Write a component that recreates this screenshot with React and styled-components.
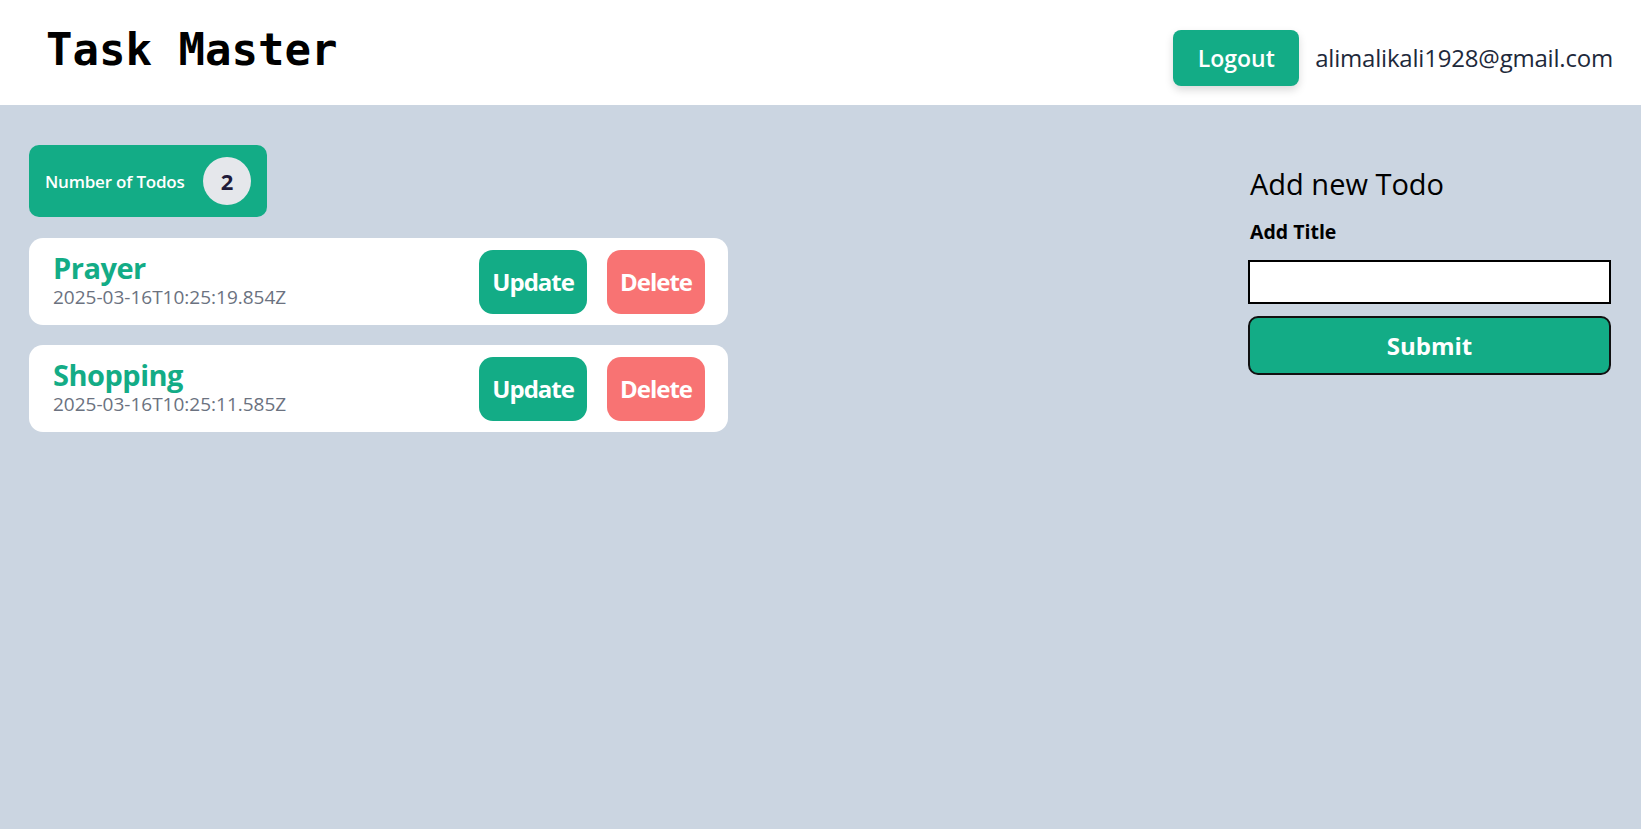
import React, { useState } from 'react';
import styled, { createGlobalStyle } from 'styled-components';

const GlobalStyle = createGlobalStyle`
  html, body {
    margin: 0;
    padding: 0;
    background: #cbd5e1;
    font-family: "Open Sans", "Noto Sans", Arial, sans-serif;
  }
  * {
    box-sizing: border-box;
  }
`;

const todos = [
  { id: 1, title: 'Prayer', createdAt: '2025-03-16T10:25:19.854Z' },
  { id: 2, title: 'Shopping', createdAt: '2025-03-16T10:25:11.585Z' },
];

const App = () => {
  const [title, setTitle] = useState('');

  return (
    <Page>
      <GlobalStyle />
      <Header>
        <Logo>Task Master</Logo>
        <UserBox>
          <LogoutButton>Logout</LogoutButton>
          <Email>alimalikali1928@gmail.com</Email>
        </UserBox>
      </Header>
      <Main>
        <TodoColumn>
          <CountBadge>
            <CountLabel>Number of Todos</CountLabel>
            <CountCircle>{todos.length}</CountCircle>
          </CountBadge>
          {todos.map(todo => (
            <TodoCard key={todo.id}>
              <TodoText>
                <TodoTitle>{todo.title}</TodoTitle>
                <TodoDate>{todo.createdAt}</TodoDate>
              </TodoText>
              <Actions>
                <ActionButton>Update</ActionButton>
                <ActionButton danger>Delete</ActionButton>
              </Actions>
            </TodoCard>
          ))}
        </TodoColumn>
        <FormPanel>
          <FormHeading>Add new Todo</FormHeading>
          <FieldLabel htmlFor="title">Add Title</FieldLabel>
          <TextInput
            id="title"
            value={title}
            onChange={e => setTitle(e.target.value)}
          />
          <SubmitButton>Submit</SubmitButton>
        </FormPanel>
      </Main>
    </Page>
  );
};

const Page = styled.div`
  min-height: 100vh;
  background: #cbd5e1;
`;

const Header = styled.header`
  height: 105px;
  background: #ffffff;
  display: flex;
  align-items: center;
  justify-content: space-between;
  padding: 0 28px 0 46px;
`;

const Logo = styled.h1`
  margin: 0 0 6px;
  font-family: "DejaVu Sans Mono", "Liberation Mono", monospace;
  font-size: 44px;
  font-weight: 700;
  color: #000;
`;

const UserBox = styled.div`
  display: flex;
  align-items: center;
  gap: 16px;
  margin-top: 10px;
`;

const LogoutButton = styled.button`
  width: 126px;
  height: 56px;
  border: none;
  border-radius: 8px;
  background: #13ac86;
  color: #fff;
  font-family: inherit;
  font-size: 23px;
  font-weight: 600;
  box-shadow: 0 4px 8px rgba(0, 0, 0, 0.15);
  cursor: pointer;
`;

const Email = styled.span`
  font-size: 24px;
  font-weight: 500;
  letter-spacing: -0.2px;
  color: #1e293b;
`;

const Main = styled.main`
  display: flex;
  justify-content: space-between;
  align-items: flex-start;
  padding: 40px 30px 0 29px;
`;

const TodoColumn = styled.section`
  width: 699px;
  display: flex;
  flex-direction: column;
  align-items: flex-start;
  gap: 20px;
`;

const CountBadge = styled.div`
  width: 238px;
  height: 72px;
  border-radius: 10px;
  background: #13ac86;
  display: flex;
  align-items: center;
  justify-content: space-between;
  padding: 0 16px 0 16px;
  margin-bottom: 1px;
`;

const CountLabel = styled.span`
  color: #fff;
  font-size: 17px;
  font-weight: 600;
  letter-spacing: -0.2px;
`;

const CountCircle = styled.span`
  width: 48px;
  height: 48px;
  border-radius: 50%;
  background: #e5e7eb;
  color: #1e1b3a;
  font-size: 22px;
  font-weight: 700;
  display: flex;
  align-items: center;
  justify-content: center;
`;

const TodoCard = styled.article`
  width: 100%;
  height: 87px;
  background: #fff;
  border-radius: 14px;
  display: flex;
  align-items: center;
  justify-content: space-between;
  padding: 0 23px 0 24px;
`;

const TodoText = styled.div`
  display: flex;
  flex-direction: column;
`;

const TodoTitle = styled.h2`
  margin: -4px 0 0;
  font-size: 29px;
  line-height: 34px;
  font-weight: 700;
  color: #13ac86;
  letter-spacing: -0.5px;
`;

const TodoDate = styled.span`
  font-size: 19px;
  line-height: 24px;
  color: #6b7280;
`;

const Actions = styled.div`
  display: flex;
  gap: 20px;
`;

const ActionButton = styled.button`
  height: 64px;
  padding: 0 13px;
  border: none;
  border-radius: 14px;
  background: ${({ danger }) => (danger ? '#f87373' : '#13ac86')};
  color: #fff;
  font-family: inherit;
  font-size: 24px;
  font-weight: 700;
  letter-spacing: -1px;
  cursor: pointer;
`;

const FormPanel = styled.aside`
  width: 363px;
  display: flex;
  flex-direction: column;
  padding-top: 19px;
`;

const FormHeading = styled.h3`
  margin: 0 0 15px 2px;
  font-size: 29px;
  font-weight: 400;
  color: #000;
`;

const FieldLabel = styled.label`
  margin: 0 0 15px 2px;
  font-size: 19.5px;
  font-weight: 700;
  color: #000;
`;

const TextInput = styled.input`
  height: 44px;
  border: 2px solid #000;
  background: #fff;
  font-size: 18px;
  padding: 0 8px;
  outline: none;
`;

const SubmitButton = styled.button`
  margin-top: 12px;
  height: 59px;
  border: 2px solid #111;
  border-radius: 10px;
  background: #13ac86;
  color: #fff;
  font-family: inherit;
  font-size: 24px;
  font-weight: 700;
  cursor: pointer;
`;

export default App;
